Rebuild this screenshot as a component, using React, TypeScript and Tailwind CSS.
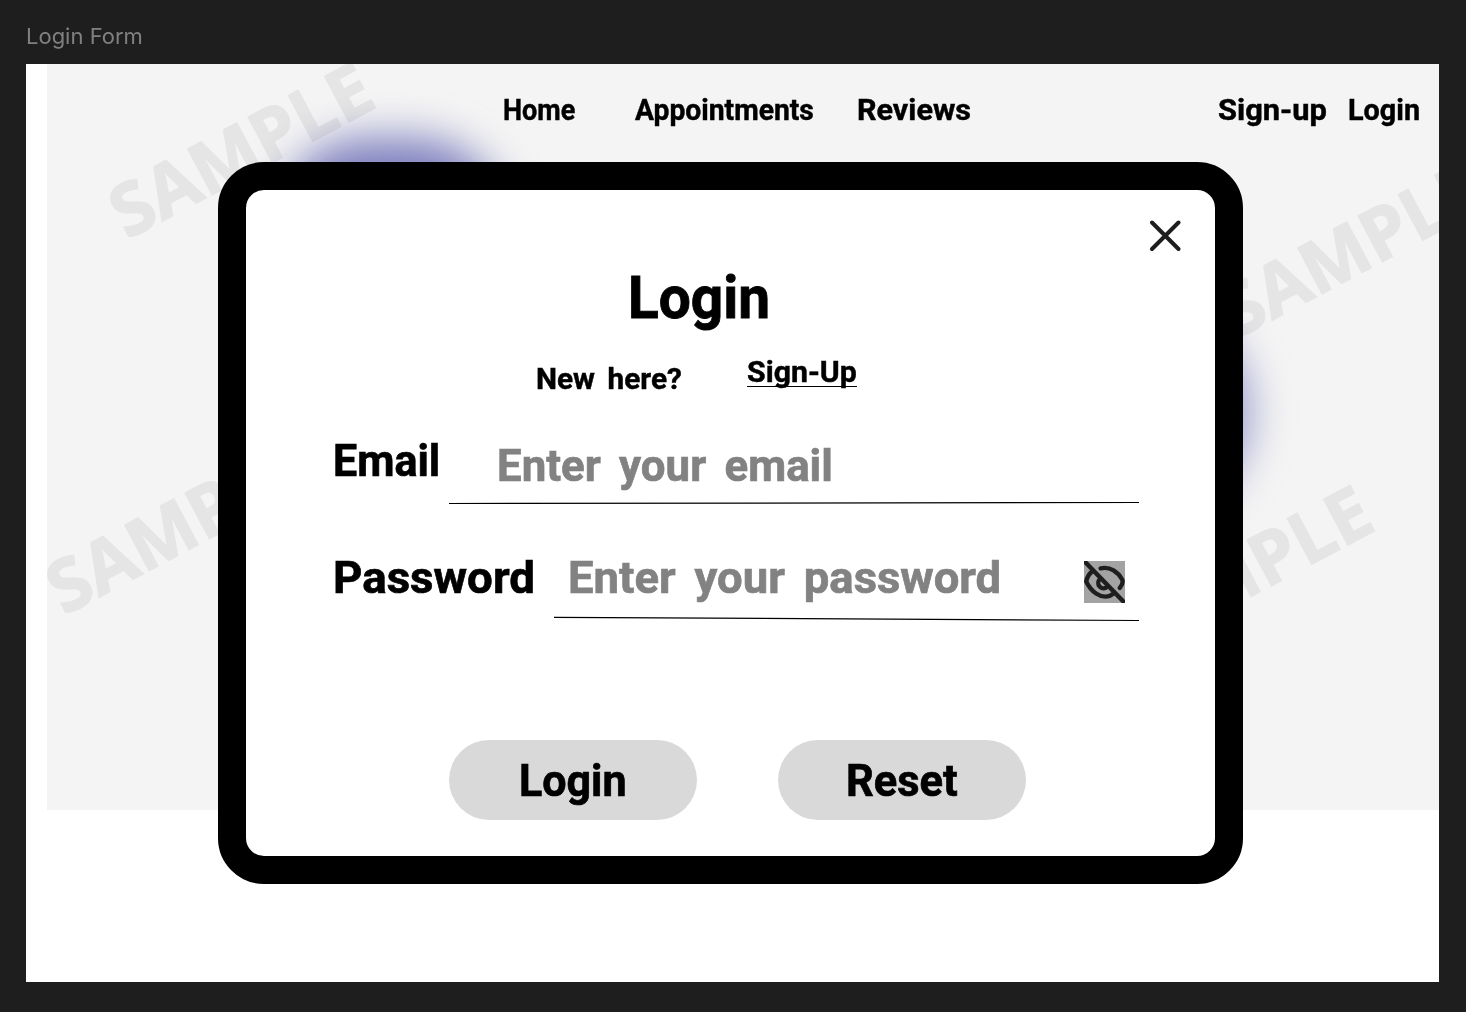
import { useLayoutEffect, useRef, useState } from "react";

/* Condenses a single line of text horizontally so it fills its box. */
function FitText({ children, className = "" }: { children: string; className?: string }) {
  const box = useRef<HTMLSpanElement>(null);
  const text = useRef<HTMLSpanElement>(null);
  const [scale, setScale] = useState(0.9);
  useLayoutEffect(() => {
    if (box.current && text.current) {
      setScale(box.current.clientWidth / text.current.offsetWidth);
    }
  }, [children]);
  return (
    <span ref={box} className={`block shrink-0 whitespace-nowrap font-bold leading-none [word-spacing:0.17em] [-webkit-text-stroke:0.015em_currentColor] ${className}`}>
      <span ref={text} className="inline-block origin-left align-top" style={{ transform: `scaleX(${scale})` }}>
        {children}
      </span>
    </span>
  );
}

function Watermark({ className }: { className: string }) {
  return (
    <span
      className={`absolute origin-[0_64px] -rotate-[28deg] whitespace-nowrap font-['Open_Sans'] text-[72.5px] font-bold leading-none text-[#e4e4e4] opacity-55 mix-blend-multiply [-webkit-text-stroke:1.5px_#e4e4e4] ${className}`}
    >
      SAMPLE
    </span>
  );
}

function Backdrop() {
  return (
    <div aria-hidden="true" className="absolute inset-y-0 left-[21px] right-0 h-[746px] overflow-hidden bg-white">
      <div className="absolute left-[226px] top-[74px] h-[220px] w-[236px] rounded-[96px] bg-[#8486c8] blur-[21px]" />
      <div className="absolute left-[990px] top-[242px] h-[212px] w-[210px] rounded-[50%] bg-[#9294d0] blur-[22px]" />
      <div className="absolute inset-0 bg-[#f4f4f4] mix-blend-multiply" />
      <Watermark className="left-[80px] top-[112px]" />
      <Watermark className="left-[17px] top-[488px]" />
      <Watermark className="left-[1190px] top-[211px]" />
      <Watermark className="left-[1079px] top-[535px]" />
    </div>
  );
}

function EyeOff() {
  return (
    <svg viewBox="0 0 121 125" className="block h-[42px] w-[41px] bg-[#a3a3a3]" fill="none" stroke="#1e1e1e" strokeWidth="13" strokeLinecap="round" strokeLinejoin="round">
      <path d="M49 22C78 15 101 34 113 55Q118 66 106 80" />
      <path d="M25 30Q10 42 6 61C20 90 47 113 76 104L86 98" />
      <path d="M47 54A14 14 0 1 0 68 77" />
      <path d="M4 4L117 121" />
    </svg>
  );
}

export default function App() {
  return (
    <div className="h-[1012px] w-[1466px] overflow-hidden bg-[#1e1e1e] font-['Roboto',sans-serif] text-black">
      <div className="flex h-16 items-start pl-[26px] pt-[22px]">
        <span className="font-['Inter'] text-[22px] leading-7 text-[#808080]">Login Form</span>
      </div>
      <div className="relative ml-[26px] h-[918px] w-[1413px] overflow-hidden bg-white">
        <Backdrop />
        <nav className="relative flex h-[98px] items-start pl-[477px] pt-[31px] text-[30px]">
          <FitText className="w-[72px]">Home</FitText>
          <FitText className="ml-[60px] w-[179px]">Appointments</FitText>
          <FitText className="ml-[43px] w-[114px]">Reviews</FitText>
          <FitText className="ml-[247px] w-[109px]">Sign-up</FitText>
          <FitText className="ml-[21px] w-[72px]">Login</FitText>
        </nav>
        <main className="relative ml-[192px] h-[722px] w-[1025px] rounded-[46px] border-[28px] border-black bg-white">
          <header className="flex h-[171px] justify-end">
            <div className="flex-1 pl-[382px] pt-[78px]">
              <FitText className="w-[142px] text-[60px]">Login</FitText>
            </div>
            <button aria-label="Close" className="mr-[33px] mt-[30px] h-8 w-8">
              <svg viewBox="0 0 32 32" className="block h-8 w-8" stroke="#1e1e1e" strokeWidth="4" strokeLinecap="round">
                <path d="M2 2.5L28.5 29M28.5 2.5L2 29" />
              </svg>
            </button>
          </header>
          <div className="flex h-[76px] items-start pl-[290px] text-[30px]">
            <FitText className="mt-[3px] w-[146px]">New here?</FitText>
            <a className="ml-[65px] h-[26px] border-b border-black">
              <FitText className="-mt-[4px] w-[110px]">Sign-Up</FitText>
            </a>
          </div>
          <div className="flex h-[117px] items-start pl-[87px]">
            <FitText className="mt-[1px] w-[107px] text-[45px]">Email</FitText>
            <div className="ml-[9px] w-[690px]">
              <FitText className="ml-[48px] mt-[6px] w-[336px] text-[45px] text-[#828282]">Enter your email</FitText>
              <svg viewBox="0 0 690 4" className="mt-[14px] block h-1 w-[690px]" stroke="#000" strokeWidth="1.2">
                <line x1="0" y1="1.5" x2="690" y2="0.5" />
              </svg>
            </div>
          </div>
          <div className="flex h-[186px] items-start pl-[87px]">
            <FitText className="mt-[1px] w-[202px] text-[45px]">Password</FitText>
            <div className="ml-[19px] w-[585px]">
              <div className="flex h-[62px]">
                <FitText className="ml-[14px] mt-[1px] w-[433px] text-[45px] text-[#828282]">Enter your password</FitText>
                <button aria-label="Show password" className="ml-[83px] mt-[7px] h-[42px]">
                  <EyeOff />
                </button>
              </div>
              <svg viewBox="0 0 585 6" className="block h-[6px] w-[585px]" stroke="#000" strokeWidth="1.2">
                <line x1="0" y1="1.3" x2="585" y2="4.5" />
              </svg>
            </div>
          </div>
          <div className="flex gap-[81px] pl-[203px]">
            <button className="flex h-20 w-[248px] rounded-full bg-[#d9d9d9] pl-[70px] pt-[18px]">
              <FitText className="w-[108px] text-[45px]">Login</FitText>
            </button>
            <button className="flex h-20 w-[248px] rounded-full bg-[#d9d9d9] pl-[68px] pt-[18px]">
              <FitText className="w-[112px] text-[45px]">Reset</FitText>
            </button>
          </div>
        </main>
      </div>
    </div>
  );
}
